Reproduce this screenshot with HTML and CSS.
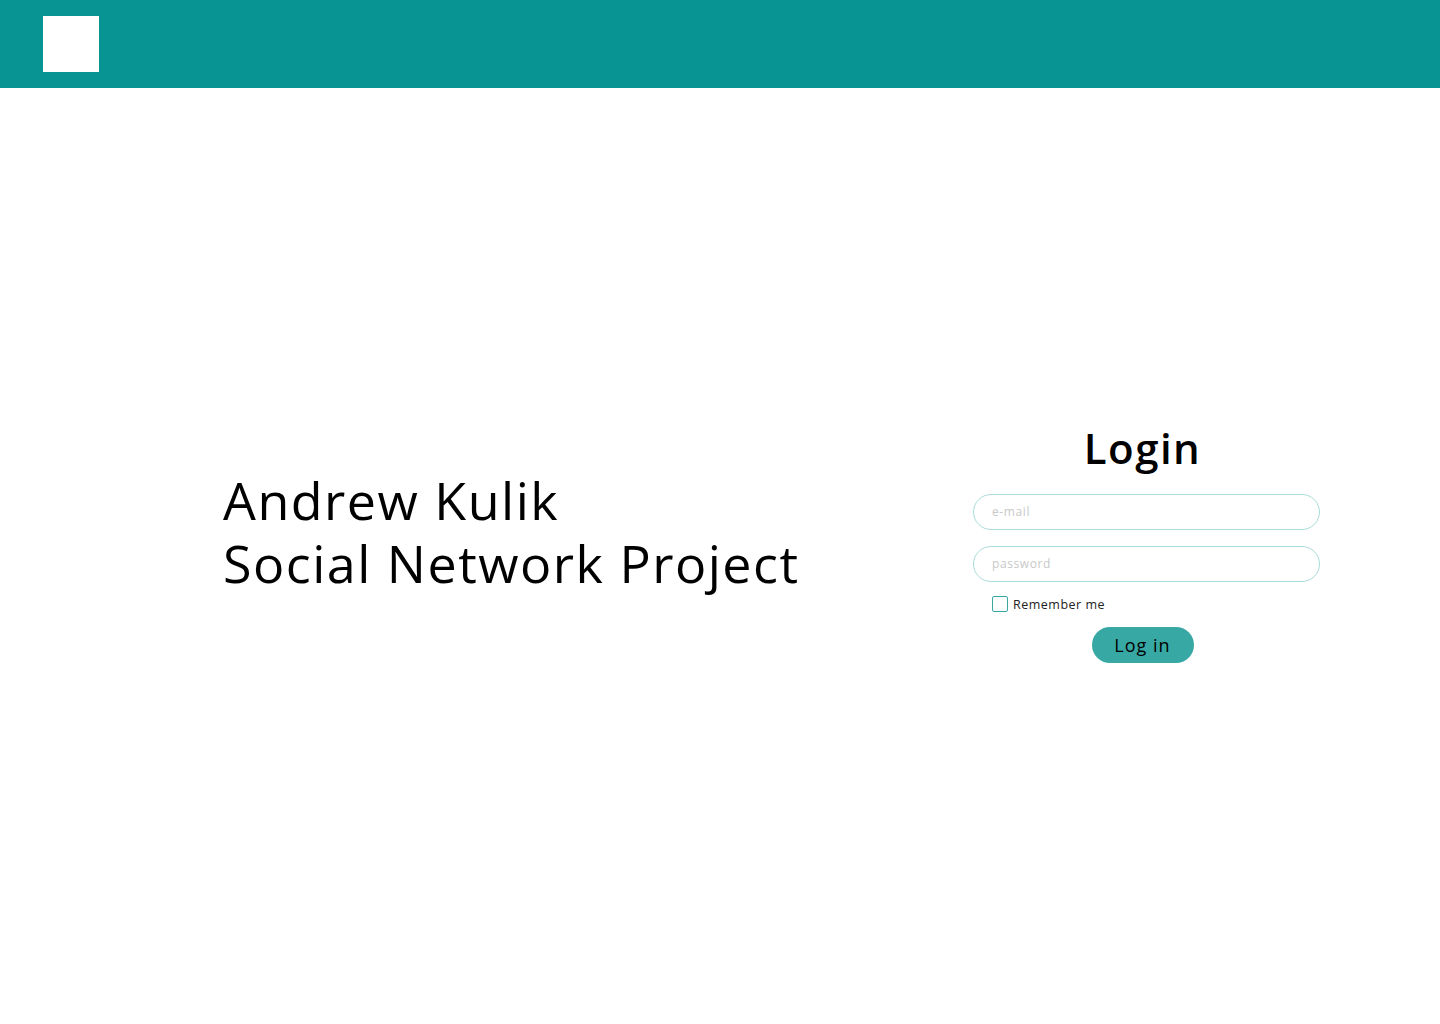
FILE: index.html
```html
<!DOCTYPE html>
<html lang="en">
<head>
<meta charset="utf-8">
<title>Social Network Project</title>
<link rel="stylesheet" href="styles.css">
</head>
<body>
<header class="header">
  <div class="logo"></div>
</header>
<main class="main">
  <section class="intro">
    <h1 class="intro-title">Andrew Kulik<br>Social Network Project</h1>
  </section>
  <section class="login">
    <h2 class="login-title">Login</h2>
    <form class="login-form">
      <input class="field" type="email" placeholder="e-mail">
      <input class="field" type="password" placeholder="password">
      <label class="remember"><span class="checkbox"></span><span class="remember-text">Remember me</span></label>
      <button class="btn" type="button">Log in</button>
    </form>
  </section>
</main>
</body>
</html>
```
FILE: styles.css
```css
* { box-sizing: border-box; }
html, body { margin: 0; padding: 0; }
body {
  font-family: "Open Sans", "Liberation Sans", sans-serif;
  background: #fff;
  color: #000;
}
.header {
  height: 88px;
  background: #079492;
  padding: 16px 43px;
}
.logo {
  width: 56px;
  height: 56px;
  background: #fff;
}
.main {
  height: 936px;
  display: flex;
  align-items: center;
  padding-bottom: 28px;
}
.intro {
  padding-left: 223px;
  width: 973px;
  margin-top: -22px;
}
.intro-title {
  margin: 0;
  font-weight: 400;
  font-size: 52px;
  line-height: 63px;
  letter-spacing: 1.5px;
}
.login {
  width: 347px;
  display: flex;
  flex-direction: column;
  align-items: center;
}
.login-title {
  margin: 0 0 20px 0;
  font-size: 42px;
  font-weight: 600;
  line-height: 52px;
  letter-spacing: 1.5px;
  transform: translateX(-4px);
}
.login-form {
  width: 100%;
  display: flex;
  flex-direction: column;
  align-items: stretch;
  gap: 16px;
}
.field {
  height: 36px;
  border: 1px solid #a9dcd9;
  border-radius: 18px;
  padding: 0 18px;
  font-family: inherit;
  font-size: 12px;
  letter-spacing: 0.6px;
  outline: none;
}
.field::placeholder { color: #c8c8c8; }
.remember {
  display: flex;
  align-items: center;
  gap: 5px;
  padding-left: 19px;
  margin-top: -2px;
  font-size: 12.5px;
  letter-spacing: 0.5px;
  color: #222;
}
.checkbox {
  width: 16px;
  height: 16px;
  border: 1px solid #37a8a3;
  border-radius: 2px;
}
.btn {
  align-self: center;
  transform: translateX(-4px);
  width: 102px;
  height: 36px;
  margin-top: -2px;
  border: none;
  border-radius: 18px;
  background: #37a8a3;
  color: #000;
  font-family: inherit;
  font-size: 18px;
  letter-spacing: 1px;
}
```
